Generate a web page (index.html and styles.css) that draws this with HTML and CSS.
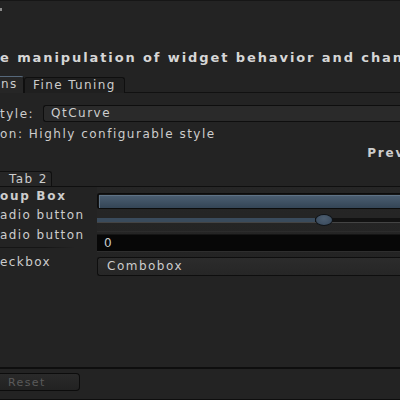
FILE: index.html
```html
<!DOCTYPE html>
<html lang="en">
<head>
    <meta charset="UTF-8">
    <title>Widget Style</title>
    <link rel="stylesheet" href="styles.css">
</head>
<body>

<div class="window">
    <div class="topline"><span class="mark"></span></div>

    <h2 class="intro">e manipulation of widget behavior and chan</h2>

    <div class="tabbar">
        <div class="tab active">ns</div>
        <div class="tab">Fine Tuning</div>
    </div>

    <div class="page">
        <div class="style-row">
            <label class="style-label">tyle:</label>
            <div class="combo">QtCurve</div>
        </div>
        <p class="desc">on: Highly configurable style</p>
        <p class="preview-title">Prev</p>

        <div class="tabbar inner">
            <div class="tab active small">Tab 2</div>
        </div>

        <div class="preview">
            <!-- left column: group box -->
            <div class="group">
                <div class="group-title">oup Box</div>
                <div class="opt">adio button</div>
                <div class="opt">adio button</div>
                <div class="sep"></div>
                <div class="opt check">eckbox</div>
            </div>

            <!-- right column: widgets -->
            <div class="widgets">
                <div class="progress"><div class="progress-fill"></div></div>
                <div class="slider">
                    <div class="groove">
                        <div class="groove-done" style="width: 218px"></div>
                    </div>
                    <div class="handle"></div>
                </div>
                <div class="lineedit">0</div>
                <div class="combo box">Combobox</div>
            </div>
        </div>
    </div>

    <div class="footer">
        <button class="btn" disabled>Reset</button>
    </div>
</div>

</body>
</html>
```

FILE: styles.css
```css
body {
    margin: 0;
    padding: 0;
    background: #232323;
    font-family: "DejaVu Sans", "Liberation Sans", sans-serif;
    font-size: 12px;
    letter-spacing: 1.5px;
    color: #cdcdcd;
}

.window {
    width: 400px;
    height: 400px;
    overflow: hidden;
    display: flex;
    flex-direction: column;
}

.topline {
    height: 1px;
    background: #161616;
    position: relative;
}

.mark {
    position: absolute;
    left: 0;
    top: 8px;
    width: 2px;
    height: 3px;
    background: #8a8a8a;
}

.intro {
    margin: 48px 0 0 0;
    height: 18px;
    line-height: 18px;
    font-size: 13px;
    font-weight: bold;
    letter-spacing: 1.9px;
    white-space: nowrap;
    color: #d6d6d6;
}

.tabbar {
    display: flex;
    margin-top: 9px;
    height: 16px;
    border-bottom: 1px solid #111;
}

.tab {
    height: 15px;
    line-height: 15px;
    margin-top: 1px;
    padding: 0 8px;
    background: #1f1f1f;
    border: 1px solid #0f0f0f;
    border-bottom: none;
    border-radius: 3px 3px 0 0;
    white-space: nowrap;
    letter-spacing: 1.4px;
}

.tab.active {
    background: #262626;
    margin-top: 0;
    height: 16px;
    padding: 0 0 0 1px;
    width: 22px;
    border-left: none;
    border-top: 1px solid #56687a;
    border-radius: 0 3px 0 0;
}

.page {
    padding-top: 12px;
}

.style-row {
    display: flex;
    align-items: center;
    height: 17px;
}

.style-label {
    width: 43px;
    white-space: nowrap;
}

.combo {
    flex: 1;
    height: 15px;
    line-height: 15px;
    padding-left: 7px;
    background: #2a2a2a;
    border: 1px solid #0e0e0e;
    border-right: none;
    border-radius: 3px 0 0 3px;
}

.desc {
    margin: 4px 0 0 0;
    line-height: 17px;
    white-space: nowrap;
}

.preview-title {
    margin: 2px -5px 0 0;
    line-height: 17px;
    text-align: right;
    font-weight: bold;
    font-size: 12px;
    letter-spacing: 1.8px;
}

.tabbar.inner {
    margin-top: 9px;
    height: 15px;
    border-bottom: 1px solid #0f0f0f;
}

.tab.small {
    width: 42px;
    height: 14px;
    line-height: 14px;
    padding-left: 9px;
    border-top: 1px solid #0f0f0f;
    border-right: 1px solid #0f0f0f;
}

.preview {
    display: flex;
}

.group {
    width: 97px;
    white-space: nowrap;
    overflow: hidden;
}

.group-title {
    line-height: 18px;
    font-weight: bold;
    font-size: 12px;
    letter-spacing: 1.7px;
}

.opt {
    line-height: 20px;
    letter-spacing: 1.4px;
}

.sep {
    height: 1px;
    width: 75px;
    margin: 2px 0 5px 0;
    background: linear-gradient(to right, #151515, #151515 60%, rgba(21, 21, 21, 0));
}

.opt.check {
    line-height: 18px;
}

.widgets {
    flex: 1;
    padding-top: 6px;
    background: linear-gradient(#262626, #232323);
}

.progress {
    box-sizing: border-box;
    height: 16px;
    border: 1px solid #0c0c0c;
    border-right: none;
    border-radius: 3px 0 0 3px;
    padding: 1px 0 0 1px;
    background: #161616;
}

.progress-fill {
    height: 12px;
    border-top: 1px solid #5f7386;
    border-left: 1px solid #5f7386;
    background: linear-gradient(#4a5d70, #344556);
}

.slider {
    position: relative;
    height: 22px;
    border-bottom: 1px solid #2c2c2c;
}

.groove {
    position: absolute;
    left: 0;
    right: 0;
    top: 9px;
    height: 4px;
    background: #121212;
    border-bottom: 1px solid #444;
}

.groove-done {
    height: 4px;
    background: #3a4b5c;
}

.handle {
    position: absolute;
    left: 218px;
    top: 5px;
    width: 16px;
    height: 10px;
    border: 1px solid #101418;
    border-radius: 50%;
    background: radial-gradient(ellipse at 50% 35%, #4d5e70, #36475a);
}

.lineedit {
    margin-top: 2px;
    height: 16px;
    line-height: 16px;
    padding-left: 7px;
    background: #070707;
    border-top: 1px solid #151515;
    border-bottom: 1px solid #2e2e2e;
}

.combo.box {
    flex: none;
    margin-top: 5px;
    height: 17px;
    line-height: 17px;
    padding-left: 9px;
    background: linear-gradient(#2c2c2c, #262626);
}

.footer {
    margin-top: auto;
    height: 33px;
    border-top: 2px solid #0e0e0e;
    border-bottom: 1px solid #0e0e0e;
    padding-top: 4px;
    box-sizing: border-box;
}

.btn {
    display: block;
    width: 80px;
    height: 18px;
    margin: 0;
    padding: 0 0 0 8px;
    text-align: left;
    font-family: inherit;
    font-size: 11px;
    letter-spacing: 1.4px;
    color: #5a5a5a;
    background: linear-gradient(#2a2a2a, #222);
    border: 1px solid #0c0c0c;
    border-left: none;
    border-radius: 0 4px 4px 0;
}
```
